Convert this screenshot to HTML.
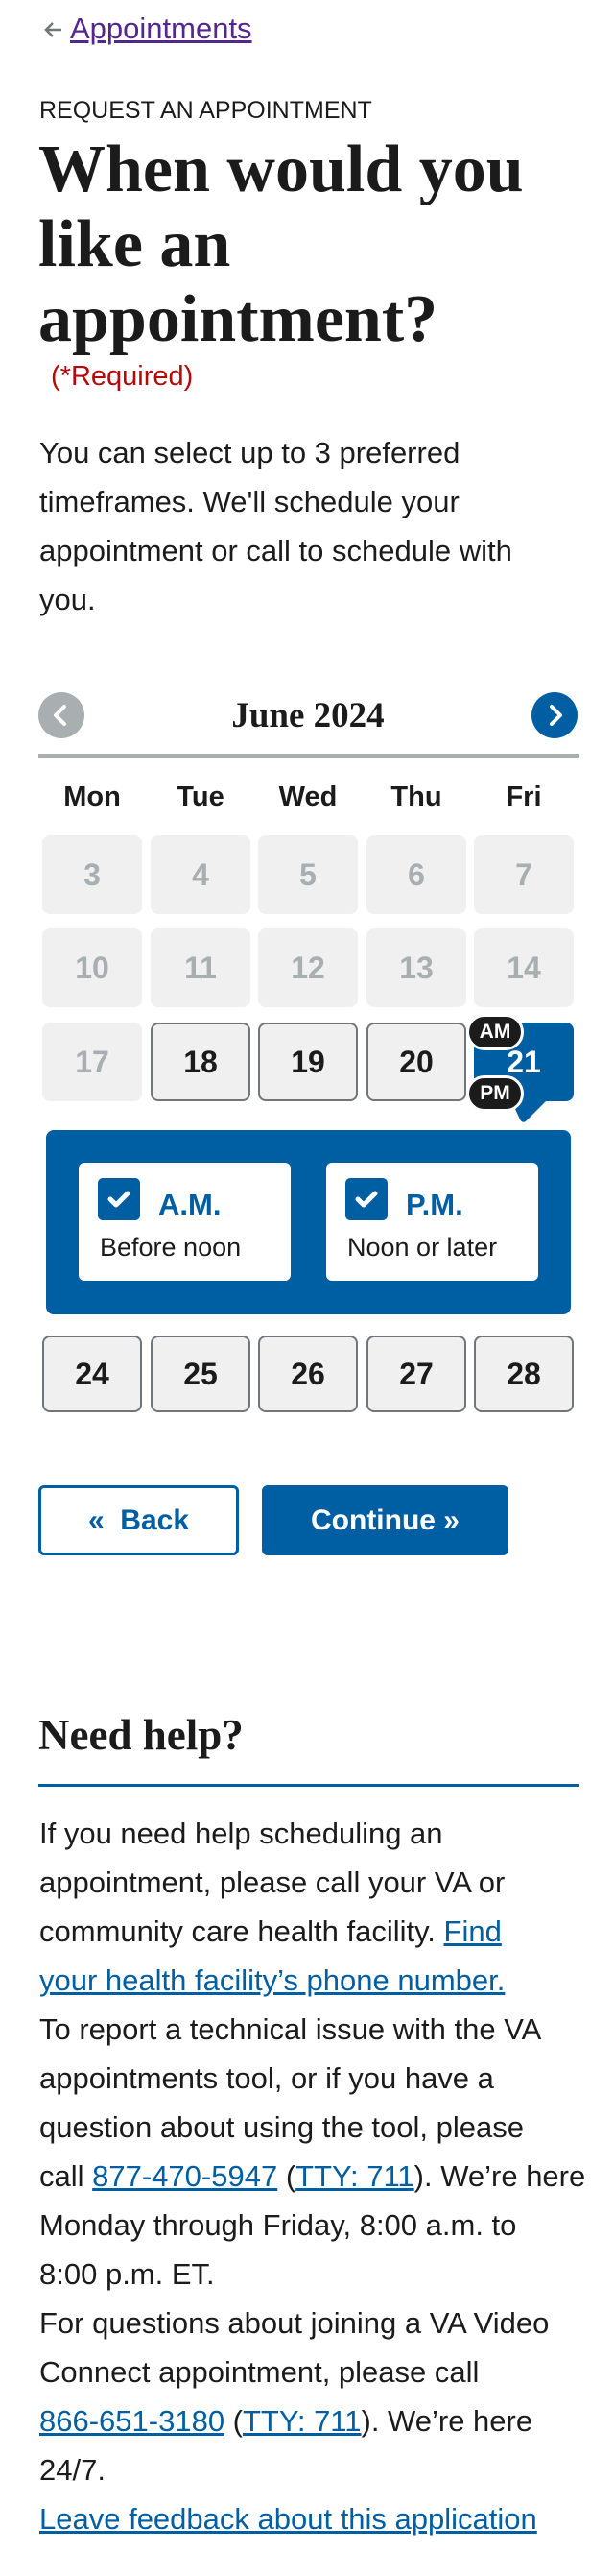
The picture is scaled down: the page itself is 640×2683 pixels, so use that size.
<!DOCTYPE html>
<html><head><meta charset="utf-8">
<style>
*{margin:0;padding:0;box-sizing:border-box}
body{width:640px;height:2683px;background:#fff;position:relative;font-family:"Liberation Sans",sans-serif;color:#1b1b1b;overflow:hidden}
.a{position:absolute;white-space:nowrap}
.serif{font-family:"Liberation Serif",serif;font-weight:bold}
.cell{position:absolute;width:104px;height:82px;border-radius:8px;background:#f0f0f0;display:flex;align-items:center;justify-content:center;font-weight:bold;font-size:32px}
.dis{color:#a9aeb1}
.en{border:2px solid #71767a;color:#1b1b1b}
.dh{position:absolute;top:812px;width:112px;text-align:center;font-weight:bold;font-size:29px;line-height:36px}
a,.lnk{color:#005ea2;text-decoration:underline}
.badge{position:absolute;left:486px;width:60px;height:38px;border-radius:19px;background:#1b1b1b;border:3px solid #fff;color:#fff;font-weight:bold;font-size:21px;display:flex;align-items:center;justify-content:center}
.card{position:absolute;top:1211px;width:221px;height:123px;background:#fff;border-radius:6px}
.cb{position:absolute;left:20px;top:16px;width:44px;height:44px;background:#005ea2;border-radius:5px}
.opt{position:absolute;left:83px;top:26px;font-weight:bold;font-size:31px;color:#005ea2;line-height:36px}
.sub{position:absolute;left:22px;top:72px;font-size:27px;line-height:32px}
.p{font-size:31px;line-height:51px}
</style></head><body>

<svg class="a" style="left:44px;top:20px" width="22" height="22" viewBox="0 0 22 22"><path d="M20 11H4M11 4l-7 7 7 7" stroke="#71767a" stroke-width="2.5" fill="none"/></svg>
<div class="a" style="left:73px;top:12px;font-size:31px;line-height:36px;color:#54278f;text-decoration:underline">Appointments</div>

<div class="a" style="left:41px;top:100px;font-size:25px;line-height:30px">REQUEST AN APPOINTMENT</div>
<div class="a serif" style="left:40px;top:138px;font-size:70px;line-height:78px">When would you<br>like an<br>appointment?</div>
<div class="a" style="left:53px;top:375px;font-size:29px;line-height:34px;color:#b50909">(*Required)</div>

<div class="a p" style="left:41px;top:446px">You can select up to 3 preferred<br>timeframes. We'll schedule your<br>appointment or call to schedule with<br>you.</div>

<div class="a" style="left:40px;top:721px;width:48px;height:48px;border-radius:50%;background:#a9aeb1"></div>
<svg class="a" style="left:40px;top:721px" width="48" height="48" viewBox="0 0 48 48"><path d="M27 15l-9 9 9 9" stroke="#fff" stroke-width="4" fill="none" stroke-linecap="round" stroke-linejoin="round"/></svg>
<div class="a" style="left:554px;top:721px;width:48px;height:48px;border-radius:50%;background:#005ea2"></div>
<svg class="a" style="left:554px;top:721px" width="48" height="48" viewBox="0 0 48 48"><path d="M21 15l9 9-9 9" stroke="#fff" stroke-width="4" fill="none" stroke-linecap="round" stroke-linejoin="round"/></svg>
<div class="a serif" style="left:88px;width:466px;top:725px;text-align:center;font-size:37px;line-height:42px">June 2024</div>
<div class="a" style="left:40px;top:785px;width:563px;height:4px;background:#a9aeb1"></div>

<div class="dh" style="left:40px">Mon</div>
<div class="dh" style="left:153px">Tue</div>
<div class="dh" style="left:265px">Wed</div>
<div class="dh" style="left:378px">Thu</div>
<div class="dh" style="left:490px">Fri</div>

<div class="cell dis" style="left:44px;top:870px">3</div>
<div class="cell dis" style="left:157px;top:870px">4</div>
<div class="cell dis" style="left:269px;top:870px">5</div>
<div class="cell dis" style="left:382px;top:870px">6</div>
<div class="cell dis" style="left:494px;top:870px">7</div>

<div class="cell dis" style="left:44px;top:967px">10</div>
<div class="cell dis" style="left:157px;top:967px">11</div>
<div class="cell dis" style="left:269px;top:967px">12</div>
<div class="cell dis" style="left:382px;top:967px">13</div>
<div class="cell dis" style="left:494px;top:967px">14</div>

<div class="cell dis" style="left:44px;top:1065px">17</div>
<div class="cell en" style="left:157px;top:1065px">18</div>
<div class="cell en" style="left:269px;top:1065px">19</div>
<div class="cell en" style="left:382px;top:1065px">20</div>
<div class="cell" style="left:494px;top:1065px;background:#005ea2;color:#fff">21</div>
<svg class="a" style="left:530px;top:1144px" width="46" height="28" viewBox="0 0 46 28"><path d="M2 0 L12 22 Q15 27 19 23 L42 0Z" fill="#005ea2"/></svg>
<div class="badge" style="top:1056px">AM</div>
<div class="badge" style="top:1120px">PM</div>

<div class="a" style="left:48px;top:1177px;width:547px;height:192px;background:#005ea2;border-radius:8px"></div>
<div class="card" style="left:82px">
 <div class="cb"><svg width="44" height="44" viewBox="0 0 44 44"><path d="M13 22l6 6 12-12" stroke="#fff" stroke-width="5" fill="none" stroke-linecap="round" stroke-linejoin="round"/></svg></div>
 <div class="opt">A.M.</div><div class="sub">Before noon</div>
</div>
<div class="card" style="left:340px">
 <div class="cb"><svg width="44" height="44" viewBox="0 0 44 44"><path d="M13 22l6 6 12-12" stroke="#fff" stroke-width="5" fill="none" stroke-linecap="round" stroke-linejoin="round"/></svg></div>
 <div class="opt">P.M.</div><div class="sub">Noon or later</div>
</div>

<div class="cell en" style="left:44px;top:1391px;height:80px">24</div>
<div class="cell en" style="left:157px;top:1391px;height:80px">25</div>
<div class="cell en" style="left:269px;top:1391px;height:80px">26</div>
<div class="cell en" style="left:382px;top:1391px;height:80px">27</div>
<div class="cell en" style="left:494px;top:1391px;height:80px">28</div>

<div class="a" style="left:40px;top:1547px;width:209px;height:73px;border:3px solid #005ea2;border-radius:6px;display:flex;align-items:center;justify-content:center;color:#005ea2;font-weight:bold;font-size:30px">«&nbsp;&nbsp;Back</div>
<div class="a" style="left:273px;top:1547px;width:257px;height:73px;background:#005ea2;border-radius:6px;display:flex;align-items:center;justify-content:center;color:#fff;font-weight:bold;font-size:30px">Continue »</div>

<div class="a serif" style="left:40px;top:1782px;font-size:45px;line-height:50px">Need help?</div>
<div class="a" style="left:40px;top:1858px;width:563px;height:3px;background:#005ea2"></div>

<div class="a p" style="left:41px;top:1884px">If you need help scheduling an<br>appointment, please call your VA or<br>community care health facility. <span class="lnk">Find</span><br><span class="lnk">your health facility’s phone number.</span><br>To report a technical issue with the VA<br>appointments tool, or if you have a<br>question about using the tool, please<br>call <span class="lnk">877-470-5947</span> (<span class="lnk">TTY: 711</span>). We’re here<br>Monday through Friday, 8:00 a.m. to<br>8:00 p.m. ET.<br>For questions about joining a VA Video<br>Connect appointment, please call<br><span class="lnk">866-651-3180</span> (<span class="lnk">TTY: 711</span>). We’re here<br>24/7.<br><span class="lnk">Leave feedback about this application</span></div>

</body></html>
